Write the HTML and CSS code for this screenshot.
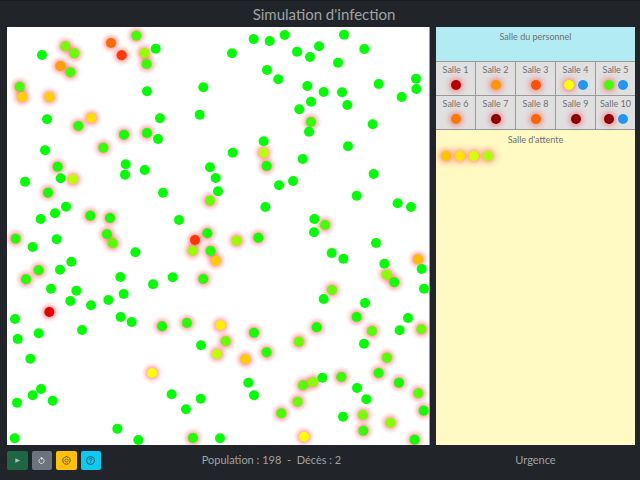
FILE: index.html
```html
<!DOCTYPE html>
<html lang="fr">
<head>
<meta charset="utf-8">
<title>Simulation d'infection</title>
<link rel="stylesheet" href="styles.css">
</head>
<body>
<header class="header"><h1 class="title">Simulation d'infection</h1></header>
<main class="main">
  <svg class="board" id="board" viewBox="21 81 1266 1254" preserveAspectRatio="none" role="img" aria-label="Population">
    <defs>
      <radialGradient id="glow">
        <stop offset="0.4" stop-color="#f22" stop-opacity="0.42"/>
        <stop offset="0.6" stop-color="#f22" stop-opacity="0.22"/>
        <stop offset="0.8" stop-color="#f22" stop-opacity="0.08"/>
        <stop offset="1" stop-color="#f22" stop-opacity="0"/>
      </radialGradient>
    </defs>
  </svg>
  <section class="hospital">
    <div class="staff">Salle du personnel</div>
    <div class="rooms" id="rooms"></div>
    <div class="waiting">
      <div>Salle d'attente</div>
      <div class="queue" id="queue"></div>
    </div>
  </section>
</main>
<footer class="footer">
  <div class="controls">
    <div class="buttons">
      <button class="btn play" type="button" aria-label="Lancer"><svg viewBox="0 0 16 16"><path d="M3 3v10l11-5z" fill="#a9c3b6"/></svg></button>
      <button class="btn reset" type="button" aria-label="Recommencer"><svg viewBox="0 0 16 16" fill="none" stroke="#e4e6e8" stroke-width="2"><path d="M4 4.500A6 6 0 1 0 9 3"/><path d="M9.500 -1L4.500 3l5 4z" fill="#e4e6e8" stroke="none"/></svg></button>
      <button class="btn settings" type="button" aria-label="Paramètres"><svg viewBox="0 0 16 16" fill="none" stroke="#5b470a" stroke-width="1.300"><path d="M6.600 1h2.800l.5 1.800 1.700-.8 2.200 2.200-.9 1.700 1.900.6v2.900l-1.900.6.9 1.800-2.200 2.100-1.700-.9-.5 1.900H6.600L6 13l-1.700.9-2.200-2.100.9-1.800-1.900-.6V6.500L3 5.900l-.9-1.700L4.300 2l1.700.8z"/><circle cx="8" cy="8" r="2.800"/></svg></button>
      <button class="btn help" type="button" aria-label="Aide"><svg viewBox="0 0 16 16" fill="none" stroke="#064452" stroke-width="1.400"><circle cx="8" cy="8" r="7"/><path d="M5.800 6.300C5.800 3.300 10.400 3.500 10.300 6c0 1.700-2.200 1.700-2.200 3.500"/><circle cx="8" cy="11.500" r=".4"/></svg></button>
    </div>
    <div class="stats">Population : 198 &nbsp;- &nbsp;Décès : 2</div>
  </div>
  <div class="place">Urgence</div>
</footer>
<script src="script.js"></script>
</body>
</html>
```
FILE: styles.css
```css
* { box-sizing: border-box; }
body {
  margin: 0;
  min-height: 100vh;
  display: flex;
  flex-direction: column;
  background: #212529;
  color: #a0a2a4;
  font-family: Lato, sans-serif;
}
.header {
  height: 27px;
  padding-left: 8px;
  border-top: 1px solid #1a1d21;
}
.title {
  margin: 0;
  font-size: 15px;
  line-height: 27px;
  font-weight: 400;
  text-align: center;
}
.main, .footer {
  display: grid;
  grid-template-columns: 423fr 199fr;
  column-gap: 6px;
  padding: 0 5px 0 7px;
}
.main { flex: 1; }
.board {
  width: 100%;
  height: 100%;
  min-height: 0;
  contain: size;
  background: #fff;
  border-right: 1px solid #999;
}
.hospital {
  display: flex;
  flex-direction: column;
  background: #fff9c4;
  color: #707070;
  font-size: 9px;
  line-height: 10px;
  text-align: center;
}
.staff {
  height: 34px;
  padding-top: 5px;
  background: #b2ebf2;
}
.rooms {
  display: grid;
  grid-template-columns: repeat(5, 1fr);
  gap: 1px;
  padding: 1px 0;
  background: #999;
}
.room {
  height: 33px;
  padding-top: 3px;
  background: #e0e0e0;
}
.dots, .queue {
  display: flex;
  gap: 4px;
}
.dots {
  justify-content: center;
  margin-top: 5px;
}
.queue { padding: 6px 5px; }
.waiting { padding-top: 5px; }
.dot {
  width: 10px;
  height: 10px;
  border-radius: 50%;
}
.sick { box-shadow: 0 0 6px 1px #ff4444bb; }
.footer { height: 35px; }
.controls {
  display: flex;
  gap: 12px;
}
.buttons {
  display: grid;
  grid-template-columns: repeat(4, 1fr);
  gap: 4px;
  width: 94px;
  height: 19px;
  margin-top: 6px;
}
.btn {
  display: flex;
  align-items: center;
  justify-content: center;
  padding: 0;
  border: 0;
  border-radius: 2px;
}
.btn svg {
  width: 9px;
  height: 9px;
}
.play svg, .reset svg {
  width: 7px;
  height: 7px;
}
.play { background: #1e6644; }
.reset { background: #6c757d; }
.settings { background: #ffc107; }
.help { background: #0dcaf0; }
.stats, .place {
  font-size: 11px;
  line-height: 29px;
  text-align: center;
}
.stats { flex: 1; }
```
FILE: script.js
```js
const healthy = [
  [126,165],[467,146],[441,274],[610,262],[599,344],[141,358],[480,355],[474,417],[135,451],
  [761,117],[809,123],[854,105],[891,155],[930,171],[957,139],[1032,104],[1093,147],[1014,188],
  [696,160],[801,210],[835,238],[922,258],[971,276],[1026,277],[1136,252],[1248,236],[1249,267],
  [1205,291],[933,305],[1042,315],[898,328],[927,395],[1118,373],[791,424],[1044,439],[698,458],
  [908,477],[377,493],[375,524],[434,510],[75,545],[182,535],[198,620],[165,640],[122,657],
  [489,578],[537,660],[170,718],[98,741],[406,757],[214,785],[180,809],[153,866],[229,872],
  [211,903],[273,916],[325,900],[371,882],[361,831],[459,853],[518,832],[630,502],[647,534],
  [654,574],[879,543],[837,556],[796,621],[1121,522],[1070,587],[1193,610],[1233,621],[943,657],
  [942,697],[995,759],[1030,776],[1128,729],[1153,791],[1265,807],[1272,866],[971,897],[1095,909],
  [45,957],[53,1017],[116,1000],[246,990],[362,951],[395,966],[91,1076],[123,1167],[98,1186],
  [51,1208],[158,1202],[44,1315],[352,1286],[415,1320],[515,1183],[558,1228],[602,1196],[603,1036],
  [1224,954],[1199,991],[1092,1031],[745,1148],[762,1186],[967,1133],[1071,1164],[1099,1198],
  [1029,1250],[660,1315]
];
const infected = [
  [196,139,"#70ff00"],[223,160,"#6f0"],[333,129,"#ff6a00"],[365,166,"#ff3a00"],[409,107,"#40ff00"],
  [433,159,"#9f0"],[440,192,"#3f0"],[181,198,"#ff9e00"],[211,217,"#40ff00"],[66,291,"#ffd000"],
  [59,260,"#4f0"],[148,291,"#ffd000"],[274,354,"#fd0"],[235,378,"#2f0"],[372,404,"#1f0"],
  [441,399,"#1f0"],[310,443,"#3f0"],[933,366,"#3f0"],[791,458,"#bf0"],[173,500,"#1f0"],
  [219,538,"#bf0"],[144,578,"#1f0"],[271,647,"#1f0"],[330,654,"#1f0"],[321,703,"#2f0"],
  [338,730,"#5f0"],[47,716,"#2f0"],[116,811,"#2f0"],[78,838,"#2f0"],[148,936,"#e60000"],
  [630,602,"#6f0"],[622,700,"#1f0"],[578,752,"#9f0"],[585,720,"#f30"],[632,753,"#2f0"],
  [647,782,"#fc0"],[610,837,"#2f0"],[800,498,"#1f0"],[975,675,"#4f0"],[710,722,"#9f0"],
  [775,713,"#1f0"],[996,870,"#6f0"],[1160,824,"#8f0"],[1183,847,"#1f0"],[1254,778,"#fb0"],
  [486,979,"#1f0"],[561,969,"#2f0"],[456,1119,"#ff0"],[579,1314,"#2f0"],[661,976,"#fe0"],
  [677,1024,"#6f0"],[651,1062,"#bf0"],[736,1078,"#fc0"],[762,998,"#1f0"],[800,1057,"#2f0"],
  [897,1025,"#6f0"],[950,982,"#1f0"],[1070,951,"#1f0"],[1116,993,"#5f0"],[1264,988,"#6f0"],
  [1161,1073,"#5f0"],[1136,1119,"#2f0"],[1197,1148,"#1f0"],[1255,1180,"#5f0"],[1271,1232,"#1f0"],
  [1024,1131,"#3f0"],[909,1156,"#5f0"],[939,1146,"#8f0"],[893,1205,"#6f0"],[844,1240,"#4f0"],
  [912,1310,"#ff0"],[1089,1245,"#7f0"],[1090,1292,"#3f0"],[1171,1268,"#8f0"],[1244,1319,"#1f0"]
];
const board = document.getElementById("board");
function circle(x, y, r, fill) {
  const c = document.createElementNS("http://www.w3.org/2000/svg", "circle");
  c.setAttribute("cx", x);
  c.setAttribute("cy", y);
  c.setAttribute("r", r);
  c.setAttribute("fill", fill);
  board.appendChild(c);
}
for (const [x, y] of infected) circle(x, y, 33, "url(#glow)");
for (const [x, y, color] of infected) circle(x, y, 15, color);
for (const [x, y] of healthy) circle(x, y, 15, "#0f0");

// Patients in treatment rooms; a doctor is shown in blue.
const doctor = "#2196f3";
const rooms = [["#b80000"],["#ff9800"],["#ff5000"],["#ff0",doctor],["#4f0",doctor],
  ["#ff7800"],["#8b0000"],["#ff6400"],["#8b0000"],["#8b0000",doctor]];
const dot = c => `<span class="dot${c === doctor ? "" : " sick"}" style="background:${c}"></span>`;
document.getElementById("rooms").innerHTML = rooms.map((r, i) =>
  `<div class="room">Salle ${i + 1}<div class="dots">${r.map(dot).join("")}</div></div>`).join("");
document.getElementById("queue").innerHTML = ["#ffc400","#ffe600","#d8ff00","#af0"].map(dot).join("");
```
